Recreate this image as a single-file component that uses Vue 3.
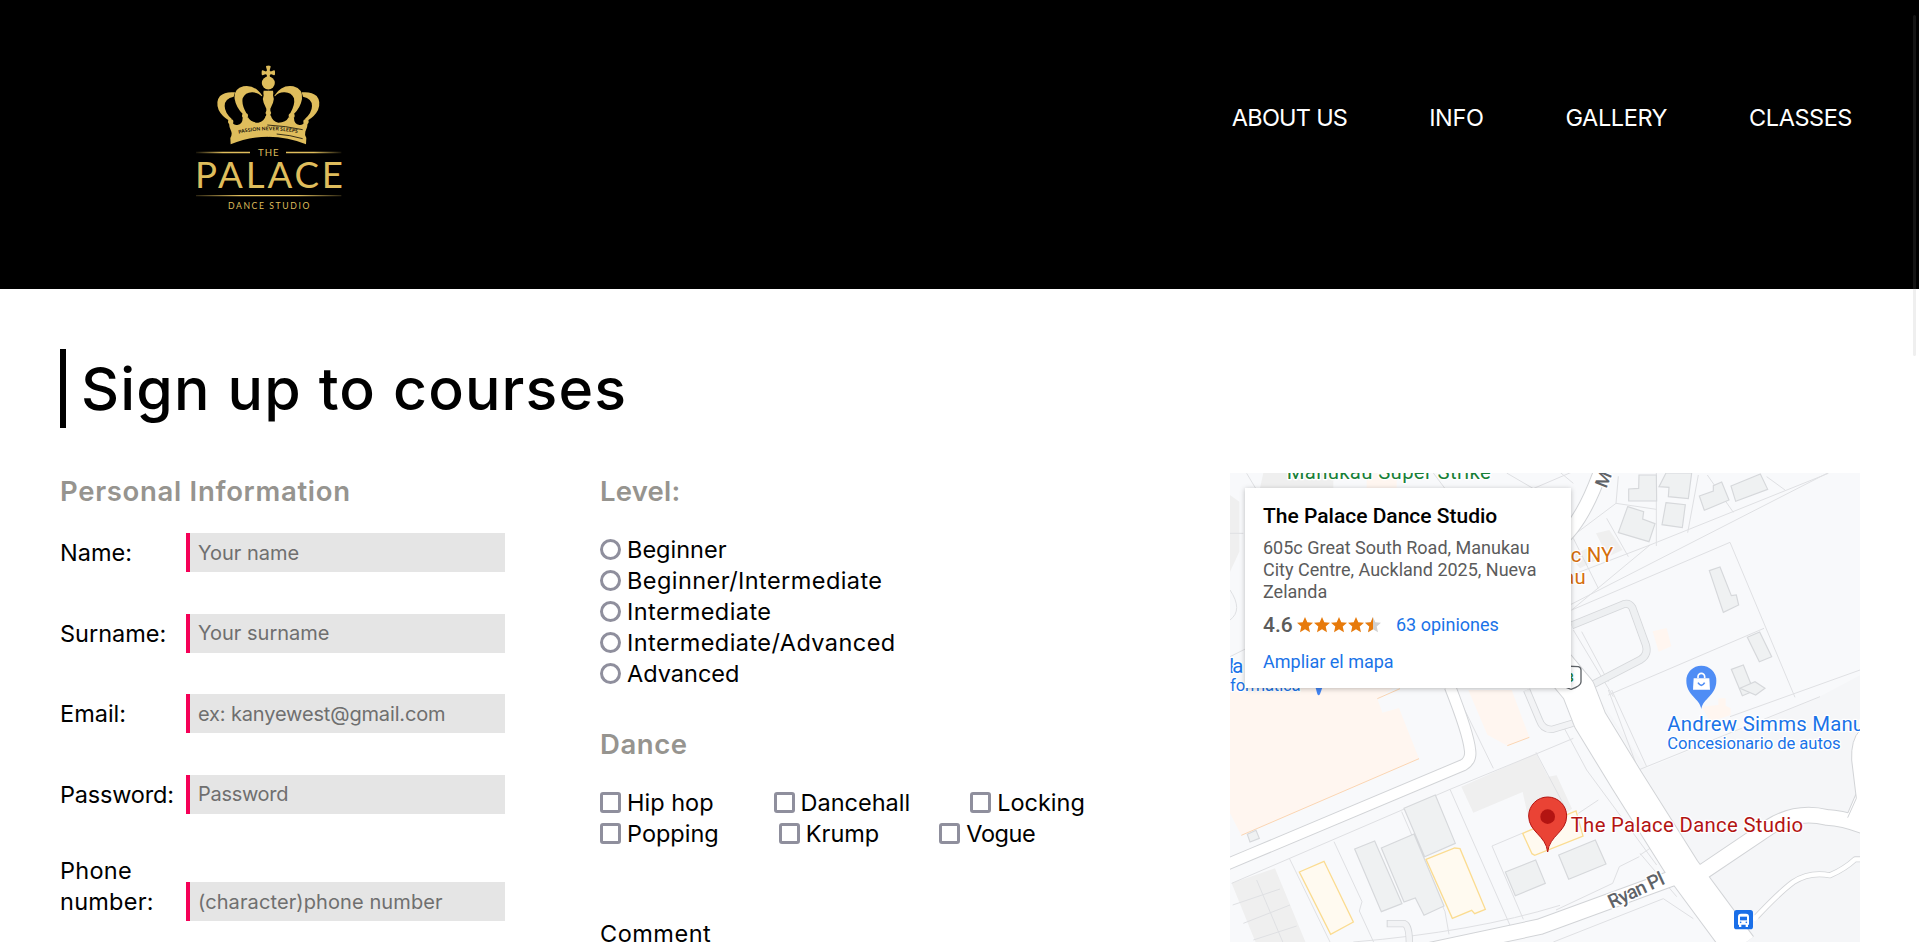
<script setup>
const nav = [
  { t: 'ABOUT US', c: 'n1' },
  { t: 'INFO', c: 'n2' },
  { t: 'GALLERY', c: 'n3' },
  { t: 'CLASSES', c: 'n4' },
]
const fields = [
  { label: 'Name:', hint: 'Your name', id: 'name' },
  { label: 'Surname:', hint: 'Your surname', id: 'surname' },
  { label: 'Email:', hint: 'ex: kanyewest@gmail.com', id: 'email' },
  { label: 'Password:', hint: 'Password', id: 'password' },
  { label: 'Phone number:', hint: '(character)phone number', id: 'phone' },
]
const levels = ['Beginner', 'Beginner/Intermediate', 'Intermediate', 'Intermediate/Advanced', 'Advanced']
const dances = [
  [{ t: 'Hip hop', c: 'd1' }, { t: 'Dancehall', c: 'd2' }, { t: 'Locking', c: 'd3' }],
  [{ t: 'Popping', c: 'd4' }, { t: 'Krump', c: 'd5' }, { t: 'Vogue', c: 'd6' }],
]
const star = 'M8 0l2.3 5.3 5.7.5-4.3 3.8 1.3 5.6L8 12.2l-5 3 1.3-5.6L0 5.8l5.7-.5z'
// the crown is symmetric: one half, drawn again mirrored
const halves = ['translate(0 0)', 'translate(530 0) scale(-1 1)']
</script>

<template>
  <div class="page">
    <header class="top">
      <svg class="logo" viewBox="0 0 540 510">
        <defs>
          <linearGradient id="fadeL"><stop offset="0" stop-color="#dfbd5c" stop-opacity=".1" /><stop offset=".5" stop-color="#dfbd5c" /></linearGradient>
          <linearGradient id="fadeR"><stop offset=".5" stop-color="#dfbd5c" /><stop offset="1" stop-color="#dfbd5c" stop-opacity=".1" /></linearGradient>
          <linearGradient id="fadeB"><stop offset="0" stop-color="#dfbd5c" stop-opacity=".2" /><stop offset=".3" stop-color="#dfbd5c" /><stop offset=".7" stop-color="#dfbd5c" /><stop offset="1" stop-color="#dfbd5c" stop-opacity=".2" /></linearGradient>
        </defs>
        <g fill="#dfbd5c">
          <g v-for="h in halves" :key="h" :transform="h">
            <path d="M266 47h-5q-3 0-3 3l3 11q-1 4-5 3l-8-3q-3 0-3 4v7q0 4 3 4l8-3q4 0 5 4l-3 10h8z" />
            <path d="M266 122h-15q-2 8 0 14-5 12 0 22l8 18v6q-5 7 0 12l-2 6h9z" />
            <path d="M266 196l-9 2q-4 16-22 20-23 0-31-16l-16 2q0 18-16 21-12 1-14-8l-11 2q0 13 7 26 3 10-3 19l1 19q53-23 114-23z" />
            <path d="M247 137q-22-34-57-28-30 8-26 38 4 25 25 46l11-2q-16-26-12-46 8-19 30-18 17 0 27 12z" />
            <path d="M165 127q-30-3-45 11-14 17-4 42 10 20 32 32l8-4q-22-20-22-40 0-23 27-28z" />
            <ellipse cx="195" cy="197" rx="9" ry="8" />
            <ellipse cx="152" cy="215" rx="8" ry="7" />
          </g>
          <circle cx="265" cy="99" r="19.500" />
          <path d="M48 305.500h162v4H48z" fill="url(#fadeL)" />
          <path d="M318 305.500h166v4H318z" fill="url(#fadeR)" />
          <path d="M48 435h436v3.500H48z" fill="url(#fadeB)" />
          <text x="234" y="319" font-size="29" textLength="62" font-family="Lato">THE</text>
          <text x="45" y="413" font-size="110" textLength="444" font-family="Lato">PALACE</text>
          <text x="144" y="477" font-size="26" textLength="244" font-family="Lato">DANCE STUDIO</text>
        </g>
        <g fill="none" stroke="#15110a" stroke-width="2.500"><path d="M262 225q56 3 106 14M290 252q40 3 78 14" /></g>
        <path id="ribbon" d="M176 251q90-20 180-1" fill="none" />
        <text font-size="15" font-weight="700" fill="#15110a" font-family="Lato"><textPath href="#ribbon" textLength="178">PASSION NEVER SLEEPS</textPath></text>
      </svg>
      <nav class="nav"><a v-for="n in nav" :key="n.t" :class="n.c">{{ n.t }}</a></nav>
    </header>

    <main class="content">
      <h1>Sign up to courses</h1>
      <div class="columns">
        <section class="personal">
          <h2 class="h-personal">Personal Information</h2>
          <div class="rows">
            <div v-for="f in fields" :key="f.id" class="row">
              <label :for="f.id" :class="'l-' + f.id">{{ f.label }}</label>
              <input :id="f.id" :class="'i-' + f.id" :placeholder="f.hint" />
            </div>
          </div>
        </section>

        <section class="course">
          <h2 class="h-level">Level:</h2>
          <div class="levels">
            <label v-for="(l, i) in levels" :key="l" class="choice"><input type="radio" name="level" /><span :class="'v' + i">{{ l }}</span></label>
          </div>
          <h2 class="h-dance">Dance</h2>
          <div class="dances">
            <div v-for="(r, i) in dances" :key="i" class="dance-row">
              <label v-for="d in r" :key="d.t" class="choice"><input type="checkbox" /><span :class="d.c">{{ d.t }}</span></label>
            </div>
          </div>
          <p class="comment">Comment</p>
        </section>

        <section class="map">
          <svg class="canvas" viewBox="30 -651 1890 1407" width="630" height="469">
            <path d="M0-680h1950V780H0z" fill="#f8f9fb" />
            <path d="M1120 0L1440 530 1590 756H1950V-60L1780 30 1280 235z" fill="#f5f6f8" />

            <!-- shops and plots -->
            <g fill="#fff6f0">
              <path d="M0-20H540L472 26l15 42 50-14 60 152L64 436 30 370z" />
              <path d="M745 0H875l53 142-66 25-60-33z" />
              <path d="M1298-176l42-10 14 55-38 16zM1445 50l50-5 0-20h22v22l15 8v20l-60 20z" />
              <path d="M440-651h90v60h-90z" />
            </g>
            <path d="M472 26L540-4M64 436L597 206M862 167l66-25" fill="none" stroke="#fbd5b2" stroke-width="3" />
            <g fill="#efefef">
              <path d="M35 580l130-45 95 230H110zM724 290l224-100 36 70 26-4 46 100-50 40-80-8-18-82-148 62zM30-585l28 20v150l-28 60z" />
              <path d="M130-651h210v46H120zM1128-470l40-10 40 60-45 20zM1050-400l60-30 20 40-50 25z" />
            </g>
            <path d="M38 645l142-48M70 700l140-55M110 570l80 190M100 750l130-42" class="ln" />

            <!-- parcel lines -->
            <g class="ln">
              <path d="M35 580L690 298 960 187 1060 145M690 298L870 706M705 0L820 235M208 505L330 756M342 455l84 180-8 28 46 100M545 365l130 300M675 665l12 68M400 756q360-30 620-110M816 468l90-38M816 468l94 220M948 187l90 170" />
              <path d="M1020-240L1870-675M1055-345L1290-435M1055-240L1290-435 1825-650M1195-641L1188-560 1309-542M1188-560L1055-460M1160-515l65 115M1309-651V-432M1435-645l-32 173M1462-645l78 112M1640-640l55 40M1060-455l75 150" />
              <path d="M1055-240L1530-443 1725 22M1165 15L1632-185M1530 80L1920-60M1060-180L1180 20M1085-175l80 150M1175 0l105 230M1165 0L1255 240M1255 240L1800 20" />
              <path d="M1025 100l75 140 210 285M1075 370l60-40M1290 475l-30 20M1258 500l-60 30-20 50-170 80M1335 500l100 120 80 136M1000 756l330-130 90 60M1260 490l110 130" />
              <path d="M30-100l60-30M30-300q40 60 0 90M80-650l60 100M640-651l60 80M860-651l120 70M930-600l140-60M1060-620l-60-50M30-470h40" />
            </g>

            <!-- buildings -->
            <g class="bld">
              <path d="M404 477l60-24 82 188-62 24zM484 474l98-42 90 216-60 28-26-52-34 12zM552 355l94-40 60 145-92 40zM82 433l26-12 10 24-28 11zM856 546l91-36 29 70-90 37zM1016 495l110-45 32 72-112 46z" />
              <path d="M1257-645h52l1 78h-84v-36l30-2zM1338-651h77l-10 77-60-6 2-28-30-2zM1338-562l58 6-9 69-61-9zM1223-550l48 15-3 22 37 14-18 54-92-27zM1438-582l42-15v-16l25-11 22 54-74 31zM1533-612l88-36 22 46-96 36z" />
              <path d="M1468-358l32-11 34 86 15-2 7 30-46 22zM1582-158l37-16 36 74-37 15zM1534-62l36-13 31 78-34 14z" />
              <path d="M1560-5l45-20 30 20-28 20z" />
            </g>
            <g fill="#fffaf0" stroke="#fbdc91" stroke-width="4">
              <path d="M238 546l74-32 88 182-68 37z" />
              <path d="M618 508l86-34 16 2 76 182-32 13-9-10-58 24z" />
              <path d="M908 430l160-67 21 75-145 58-8-5z" />
            </g>

            <!-- small lanes -->
            <g fill="none" stroke-linejoin="round">
              <path d="M1055-194L1210-257q17-6 27 10l40 110q10 30-15 46L1110-12" stroke="#d5d7da" stroke-width="24" />
              <path d="M1055-194L1210-257q17-6 27 10l40 110q10 30-15 46L1110-12" stroke="#eef0f2" stroke-width="19" />
              <path d="M920 0l38 90q10 30 40 28l60-18M500 701h50q18 0 18 55" stroke="#d5d7da" stroke-width="22" />
              <path d="M920 0l38 90q10 30 40 28l60-18M503 701h47q18 0 18 60" stroke="#f2f3f5" stroke-width="17" />
            </g>

            <!-- streets: casing, then surface -->
            <g fill="none" stroke="#d2d4d7" stroke-linejoin="round">
              <path d="M0 532L100 490 730 225q25-15 20-45Q745 130 690-10" stroke-width="37" />
              <path d="M1000-90L1075 0 1110 90 1220 270 1390 540 1560 770" stroke-width="104" />
              <path d="M540 800L960 710 1370 560M1450 545L1650 410q80-50 170-28 70 3 160 48M1900 390L1930 320" stroke-width="50" />
              <path d="M1010-440Q1090-500 1150-680" stroke-width="45" />
              <path d="M1610 680q70-75 110-104 50-32 110-20 45-20 75-48h30" stroke-width="18" />
            </g>
            <g fill="none" stroke="#fff" stroke-linejoin="round">
              <path d="M0 532L100 490 730 225q25-15 20-45Q745 130 690-10" stroke-width="31" />
              <path d="M1000-90L1075 0 1110 90 1220 270 1390 540 1560 770" stroke-width="98" />
              <path d="M540 800L960 710 1370 560M1430 558L1650 410q80-50 170-28 70 3 160 48M1900 390L1930 320" stroke-width="44" />
              <path d="M1010-440Q1090-500 1150-680" stroke-width="39" />
              <path d="M1600 690q80-85 120-114 50-32 110-20 45-20 75-48h30" stroke-width="13" />
            </g>
            <path d="M1930 110q-40 30-35 100l14 115-26 58 40 12z" fill="#fff" />
            <path d="M1920 120q-28 30-25 90l14 115-26 58" fill="none" stroke="#d2d4d7" stroke-width="3" />

            <!-- labels -->
            <g class="lbl">
              <text x="200" y="-632" textLength="612" font-size="61" fill="#188038">Manukau Super Strike</text>
              <text x="1052" y="-383" textLength="128" font-size="61" fill="#d56e0c">c NY</text>
              <text x="1030" y="-319" font-size="61" fill="#d56e0c">au</text>
              <text x="28" y="-50" textLength="42" font-size="61" fill="#1a73e8">la</text>
              <text x="30" y="3" textLength="212" font-size="50" fill="#1a73e8">formatica</text>
              <text x="1342" y="124" textLength="690" font-size="61" fill="#1a73e8">Andrew Simms Manukau</text>
              <text x="1342" y="176" textLength="520" font-size="50" fill="#1a73e8">Concesionario de autos</text>
              <text x="1052" y="427" textLength="697" font-size="61" fill="#b31412">The Palace Dance Studio</text>
              <text transform="translate(1175 656) rotate(-25)" textLength="180" font-size="58" font-weight="500" fill="#5f6368">Ryan Pl</text>
              <text transform="translate(1159-603) rotate(-68)" font-size="54" font-weight="500" fill="#5f6368">M</text>
            </g>

            <!-- highway shield -->
            <path d="M1030-72l45 2q8 2 8 10v36q0 12-30 22l-30-12z" fill="#fff" stroke="#5f6368" stroke-width="4" />
            <text x="1040" y="-24" font-size="36" font-weight="700" font-family="Roboto" fill="#188038">3</text>

            <!-- pins -->
            <path d="M286-10h22l-8 22q-4 8-8 0z" fill="#4285f4" />
            <path d="M1444 57c-4-32-45-40-45-85a45 45 0 0 1 90 0c0 45-41 53-45 85z" fill="#4f8df5" />
            <path d="M1421-35h47l2 34h-51z" fill="#fff" />
            <path d="M1434-36v-4a10 10 0 0 1 20 0v4" fill="none" stroke="#fff" stroke-width="5" />
            <path d="M1434-22q10 16 20 0" fill="none" stroke="#4f8df5" stroke-width="5" />
            <path d="M983 486c-5-50-57-60-57-108a57 57 0 0 1 114 0c0 48-52 58-57 108z" fill="#ea4335" stroke="#b31412" stroke-width="3" />
            <circle cx="983" cy="380" r="22" fill="#b31412" />
            <rect x="1542" y="660" width="57" height="58" rx="8" fill="#1a6fe8" />
            <path d="M1554 680q0-9 9-9h15q9 0 9 9v24h-3v7h-7v-7h-13v7h-7v-7h-3z" fill="#fff" />
            <path d="M1560 680h21v11h-21z" fill="#1a6fe8" />
            <circle cx="1562" cy="697" r="2.500" fill="#1a6fe8" /><circle cx="1579" cy="697" r="2.500" fill="#1a6fe8" />
          </svg>
          <div class="card">
            <strong>The Palace Dance Studio</strong>
            <p>605c Great South Road, Manukau<br />City Centre, Auckland 2025, Nueva<br />Zelanda</p>
            <div class="rating">
              <b>4.6</b>
              <span class="stars">
                <svg v-for="n in 5" :key="n" viewBox="0 0 16 16">
                  <path :d="star" :fill="n < 5 ? '#e77a0b' : '#d0d0d0'" />
                  <path v-if="n === 5" d="M8 0v12.200l-5 3 1.300-5.600L0 5.800l5.700-.5z" fill="#e77a0b" />
                </svg>
              </span>
              <a>63 opiniones</a>
            </div>
            <a class="enlarge">Ampliar el mapa</a>
          </div>
        </section>
      </div>
    </main>
    <div class="thumb"></div>
  </div>
</template>

<style>
body { background: #fff; overflow: hidden; }
</style>

<style scoped>
.page { position: relative; height: 942px; overflow: hidden; font-family: Inter, "Liberation Sans", sans-serif; font-size: 23.5px; color: #000; background: #fff; }
.top { height: 289px; box-sizing: border-box; background: #000; display: flex; justify-content: space-between; padding: 50px 67px 0 180px; }
.logo { width: 180px; height: 170px; }
.nav { display: flex; gap: 82px; margin-top: 52px; height: 31px; line-height: 31px; color: #fff; }
.nav a { white-space: nowrap; }
.n1 { letter-spacing: -.75px; }
.n2 { letter-spacing: -.4px; }
.n3 { letter-spacing: -.4px; }
.n4 { letter-spacing: -.45px; }
.content { padding: 60px 59px 0 60px; }
h1 { margin: 0; height: 79px; box-sizing: border-box; border-left: 6px solid #000; padding-left: 15px; font-size: 59px; line-height: 79px; font-weight: 550; letter-spacing: 1.15px; white-space: nowrap; }
.columns { display: flex; height: 469px; margin-top: 45px; }
.personal { width: 540px; }
.course { width: 630px; }
h2 { margin: 0; height: 37px; line-height: 37px; font-size: 27.500px; font-weight: 600; color: #96948f; white-space: nowrap; }
.h-personal { letter-spacing: .7px; }
.h-level { letter-spacing: .2px; }
.rows { display: flex; flex-direction: column; gap: 41.500px; padding-top: 23px; }
.row { display: flex; align-items: flex-end; height: 39px; }
.row:last-child { height: 66px; }
.row label { width: 126px; line-height: 31px; padding-bottom: 4px; box-sizing: border-box; }
.row .l-password { letter-spacing: -.2px; }
.row .l-phone { letter-spacing: .25px; }
.row input { width: 319px; height: 39px; box-sizing: border-box; border: 0; border-left: 4px solid #f50057; border-radius: 0; background: #e5e5e5; padding: 0 8px; font: 20px Inter, sans-serif; outline: 0; }
.row .i-email { letter-spacing: -.15px; }
.row .i-password { letter-spacing: -.3px; }
.row .i-phone { letter-spacing: .1px; }
.row input::placeholder { color: #6f6f6f; opacity: 1; }
.levels { padding-top: 24px; }
.choice { display: flex; align-items: center; height: 31px; line-height: 31px; white-space: nowrap; }
.v1, .v2, .v3 { letter-spacing: .43px; }
.d6 { letter-spacing: -.4px; }
.choice input { appearance: none; flex: none; width: 21px; height: 21px; margin: 0 6px 0 0; box-sizing: border-box; border: 3px solid #8f8f9d; background: #fff; border-radius: 3px; }
.choice input[type="radio"] { border-radius: 50%; }
.h-dance { margin-top: 37px; letter-spacing: .55px; }
.dances { padding-top: 24px; }
.dance-row { display: flex; gap: 60px; }
.comment { margin: 69px 0 0; line-height: 31px; height: 31px; letter-spacing: .5px; }
.map { position: relative; width: 630px; height: 469px; overflow: hidden; }
.canvas { display: block; }
.ln { fill: none; stroke: #dfe0e3; stroke-width: 3; }
.bld { fill: #eff1f2; stroke: #d6d8db; stroke-width: 3.500; }
.lbl text { font-family: Roboto, sans-serif; stroke: #fff; stroke-width: 8; stroke-linejoin: round; paint-order: stroke; }
.card { position: absolute; left: 15px; top: 15px; width: 326px; height: 200px; box-sizing: border-box; padding: 16px 18px; background: #fff; box-shadow: 0 1px 5px rgba(0, 0, 0, .25); font-family: Roboto, sans-serif; font-size: 18px; line-height: 22px; color: #5b5b5b; }
.card strong { display: block; font-size: 21px; font-weight: 500; line-height: 24px; color: #000; white-space: nowrap; }
.card p { margin: 9px 0 0; white-space: nowrap; }
.card a { color: #1a73e8; }
.rating { display: flex; align-items: center; height: 24px; margin-top: 10px; }
.rating b { font-size: 21px; font-weight: 500; width: 34px; }
.stars { display: flex; gap: 1px; width: 99px; }
.stars svg { width: 16px; height: 16px; }
.enlarge { display: block; margin-top: 14px; }
.thumb { position: absolute; left: 1913px; top: 15px; width: 3px; height: 341px; border-radius: 2px; background: rgba(140, 140, 140, .14); }
</style>
